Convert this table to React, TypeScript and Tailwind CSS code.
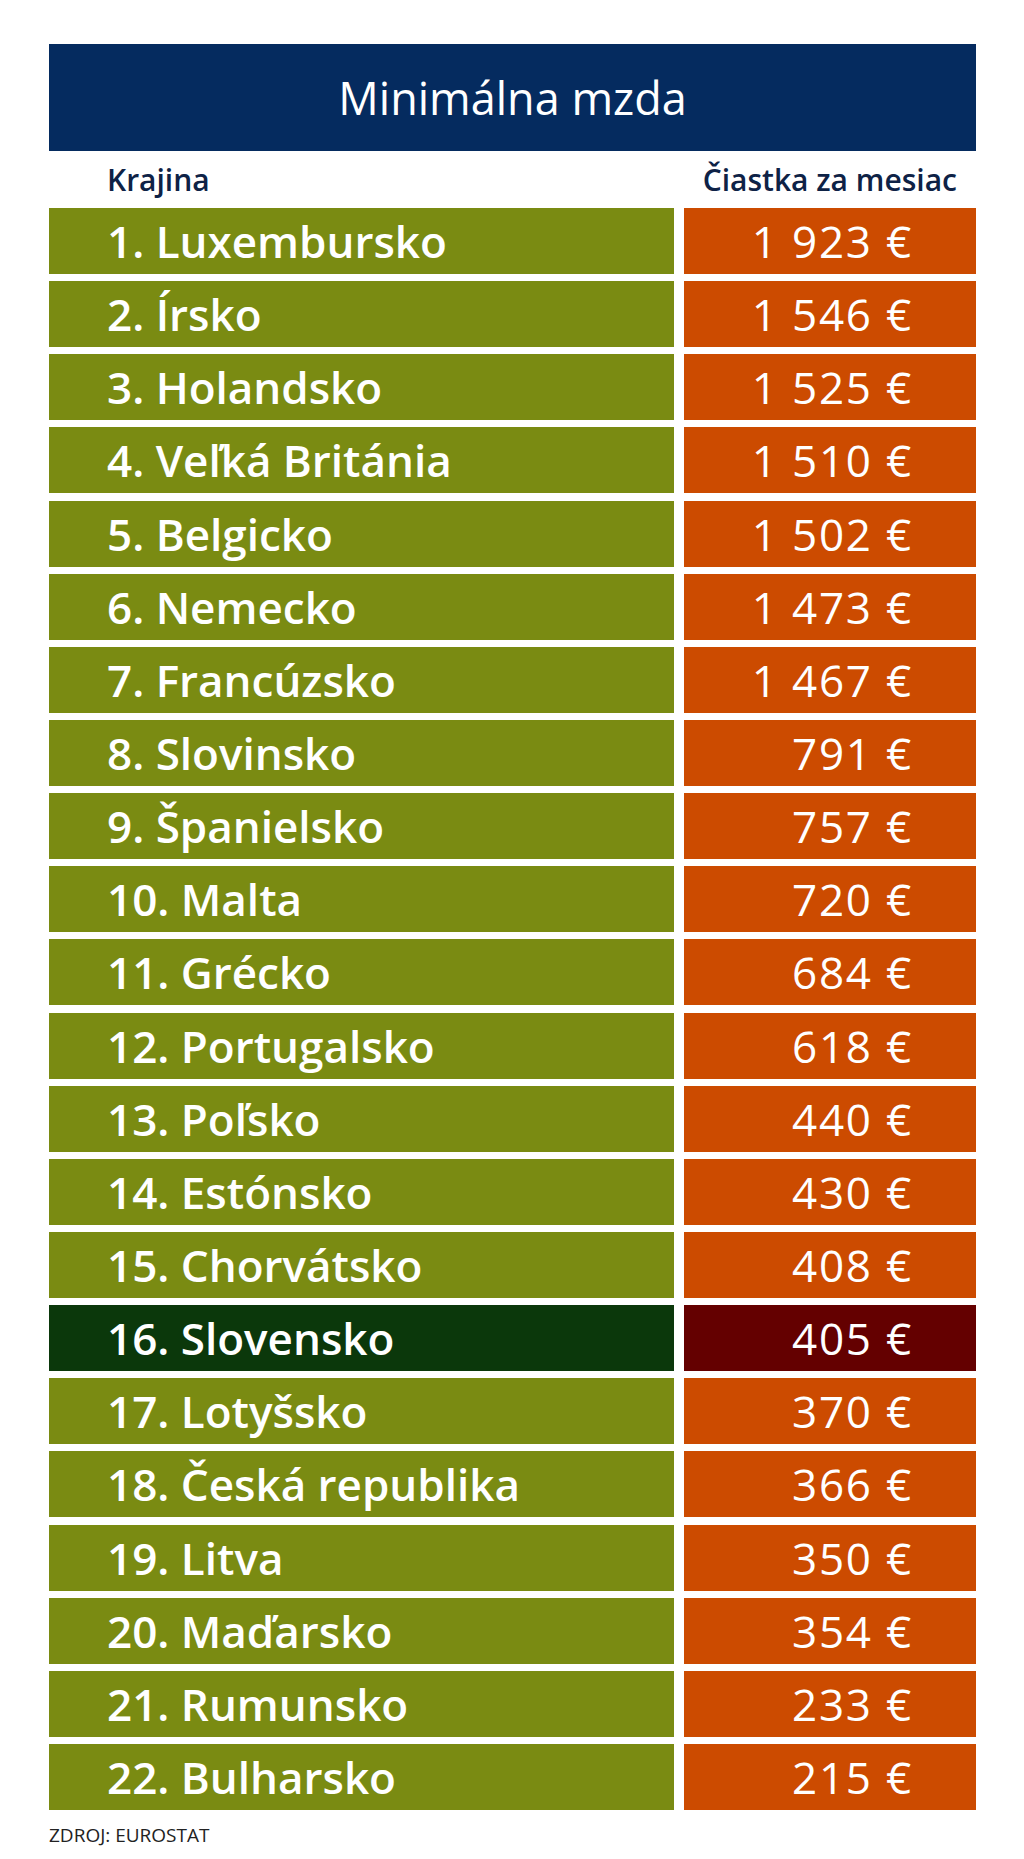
const rows: { name: string; amount: string; highlight?: boolean }[] = [
  { name: '1. Luxembursko', amount: '1 923 €' },
  { name: '2. Írsko', amount: '1 546 €' },
  { name: '3. Holandsko', amount: '1 525 €' },
  { name: '4. Veľká Británia', amount: '1 510 €' },
  { name: '5. Belgicko', amount: '1 502 €' },
  { name: '6. Nemecko', amount: '1 473 €' },
  { name: '7. Francúzsko', amount: '1 467 €' },
  { name: '8. Slovinsko', amount: '791 €' },
  { name: '9. Španielsko', amount: '757 €' },
  { name: '10. Malta', amount: '720 €' },
  { name: '11. Grécko', amount: '684 €' },
  { name: '12. Portugalsko', amount: '618 €' },
  { name: '13. Poľsko', amount: '440 €' },
  { name: '14. Estónsko', amount: '430 €' },
  { name: '15. Chorvátsko', amount: '408 €' },
  { name: '16. Slovensko', amount: '405 €', highlight: true },
  { name: '17. Lotyšsko', amount: '370 €' },
  { name: '18. Česká republika', amount: '366 €' },
  { name: '19. Litva', amount: '350 €' },
  { name: '20. Maďarsko', amount: '354 €' },
  { name: '21. Rumunsko', amount: '233 €' },
  { name: '22. Bulharsko', amount: '215 €' },
]

export default function App() {
  return (
    <div className="w-[1024px] h-[1859px] bg-white pt-[44px] pl-[49px] pr-[48px] font-['Open_Sans',sans-serif]">
      {/* Title */}
      <div className="h-[107px] bg-[#052b5f] flex items-center justify-center">
        <h1 className="text-[45px] leading-none font-medium text-white">Minimálna mzda</h1>
      </div>

      {/* Column headings */}
      <div className="h-[57px] flex items-end justify-between pb-[13px] text-[30px] leading-none font-semibold text-[#0e2246]">
        <span className="pl-[58px]">Krajina</span>
        <span className="pr-[19px]">Čiastka za mesiac</span>
      </div>

      {/* Rows */}
      <div className="flex flex-col gap-[9.15px]">
        {rows.map((row) => (
          <div key={row.name} className="grid grid-cols-[625px_1fr] gap-x-[10px] h-[64px]">
            <div
              className={
                row.highlight
                  ? 'bg-[#0b380b] flex items-center pl-[58px] text-[44px] font-semibold text-white'
                  : 'bg-[#7a8b12] flex items-center pl-[58px] text-[44px] font-semibold text-white'
              }
            >
              {row.name}
            </div>
            <div
              className={
                row.highlight
                  ? 'bg-[#640000] flex items-center justify-end pr-[63px] text-[44px] tracking-[1.8px] font-medium text-white'
                  : 'bg-[#cc4b00] flex items-center justify-end pr-[63px] text-[44px] tracking-[1.8px] font-medium text-white'
              }
            >
              {row.amount}
            </div>
          </div>
        ))}
      </div>

      {/* Source */}
      <p className="mt-[18px] text-[19px] leading-none font-medium text-[#222]">ZDROJ: EUROSTAT</p>
    </div>
  )
}
